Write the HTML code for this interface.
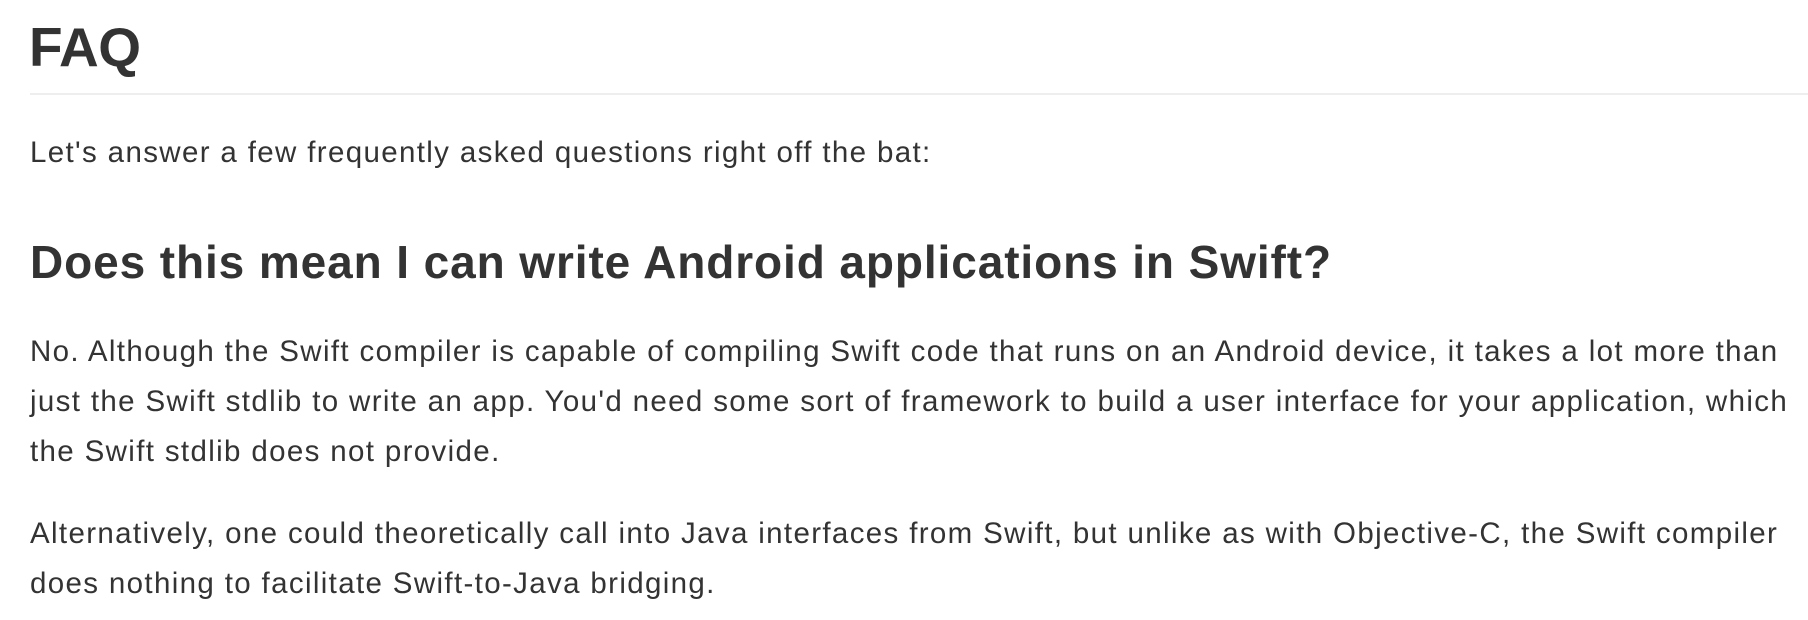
<!DOCTYPE html>
<html><head><meta charset="utf-8"><style>
html,body{margin:0;padding:0;background:#fff;width:1808px;height:620px;overflow:hidden}
body{font-family:"Liberation Sans",Arial,sans-serif;color:#333}
.a{position:absolute;left:30px;white-space:nowrap}
h1{position:absolute;left:29px;top:14px;margin:0;font-size:55px;line-height:67px;font-weight:bold;letter-spacing:-0.5px}
.rule{position:absolute;left:30px;right:0;top:93px;height:2px;background:#eee}
h2{position:absolute;left:30px;top:235px;margin:0;font-size:46px;line-height:54px;font-weight:bold;letter-spacing:0.9px}
.p{font-size:29.5px;line-height:50px;letter-spacing:1.35px}
</style></head><body>
<h1>FAQ</h1>
<div class="rule"></div>
<div class="a p" style="top:128px">Let's answer a few frequently asked questions right off the bat:</div>
<h2>Does this mean I can write Android applications in Swift?</h2>
<div class="a p" style="top:327px">No. Although the Swift compiler is capable of compiling Swift code that runs on an Android device, it takes a lot more than<br>just the Swift stdlib to write an app. You'd need some sort of framework to build a user interface for your application, which<br>the Swift stdlib does not provide.</div>
<div class="a p" style="top:509px">Alternatively, one could theoretically call into Java interfaces from Swift, but unlike as with Objective-C, the Swift compiler<br>does nothing to facilitate Swift-to-Java bridging.</div>
</body></html>
